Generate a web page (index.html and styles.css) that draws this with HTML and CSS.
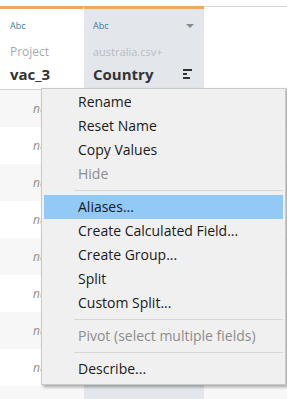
FILE: index.html
```html
<!DOCTYPE html>
<html lang="en">
<head>
  <meta charset="UTF-8" />
  <title>Data Source Grid</title>
  <link rel="stylesheet" href="styles.css">
</head>
<body>
  <div class="grid">
    <div class="header">
      <div class="col col-a">
        <div class="type">Abc</div>
        <div class="source">Project</div>
        <div class="name">vac_3</div>
      </div>
      <div class="col col-b">
        <div class="type">Abc <span class="caret"></span></div>
        <div class="source light">australia.csv+</div>
        <div class="name">Country
          <svg class="sort" width="10" height="10" viewBox="0 0 10 10">
            <rect x="0" y="0" width="9" height="2" fill="#333"/>
            <rect x="0" y="4" width="4" height="2" fill="#333"/>
            <rect x="0" y="8" width="7" height="2" fill="#333"/>
          </svg>
        </div>
      </div>
      <div class="col col-c"></div>
    </div>

    <div class="rows">
      <div class="row"><div class="cell-a">null</div><div class="cell-b"></div><div class="cell-c"></div></div>
      <div class="row"><div class="cell-a">null</div><div class="cell-b"></div><div class="cell-c"></div></div>
      <div class="row"><div class="cell-a">null</div><div class="cell-b"></div><div class="cell-c"></div></div>
      <div class="row"><div class="cell-a">null</div><div class="cell-b"></div><div class="cell-c"></div></div>
      <div class="row"><div class="cell-a">null</div><div class="cell-b"></div><div class="cell-c"></div></div>
      <div class="row"><div class="cell-a">null</div><div class="cell-b"></div><div class="cell-c"></div></div>
      <div class="row"><div class="cell-a">null</div><div class="cell-b"></div><div class="cell-c"></div></div>
      <div class="row"><div class="cell-a">null</div><div class="cell-b"></div><div class="cell-c"></div></div>
      <div class="row"><div class="cell-a"></div><div class="cell-b"></div><div class="cell-c"></div></div>
    </div>
  </div>

  <ul class="menu">
    <li>Rename</li>
    <li>Reset Name</li>
    <li>Copy Values</li>
    <li class="disabled">Hide</li>
    <li class="sep"></li>
    <li class="active">Aliases...</li>
    <li>Create Calculated Field...</li>
    <li>Create Group...</li>
    <li>Split</li>
    <li>Custom Split...</li>
    <li class="sep"></li>
    <li class="disabled">Pivot (select multiple fields)</li>
    <li class="sep"></li>
    <li>Describe...</li>
  </ul>
</body>
</html>
```

FILE: styles.css
```css
body {
  margin: 0;
  font-family: "Open Sans", "Noto Sans", sans-serif;
  background: #ffffff;
  overflow: hidden;
}

.grid {
  padding-top: 6px;
  width: 287px;
  height: 399px;
  box-sizing: border-box;
  overflow: hidden;
}

.header {
  display: flex;
  height: 83px;
  border-bottom: 1px solid #d4d4d4;
}

.col {
  box-sizing: border-box;
}

.col-a {
  width: 84px;
  border-top: 3px solid #f0a664;
  border-right: 1px solid #ffffff;
  padding-left: 10px;
}

.col-b {
  width: 120px;
  background: #e3e7eb;
  border-top: 3px solid #f0a664;
  padding-left: 9px;
  padding-right: 10px;
}

.col-c {
  flex: 1;
  border-top: 1px solid #d4d4d4;
}

.type {
  font-size: 9px;
  color: #3b7896;
  margin-top: 10px;
  height: 14px;
  line-height: 14px;
  display: flex;
  justify-content: space-between;
  align-items: center;
}

.caret {
  width: 0;
  height: 0;
  border-left: 4px solid transparent;
  border-right: 4px solid transparent;
  border-top: 4px solid #8a8a8a;
}

.source {
  font-size: 12px;
  color: #a9a9a9;
  margin-top: 11px;
  height: 16px;
  line-height: 16px;
}

.source.light {
  color: #b8bcc0;
  font-size: 11px;
}

.name {
  font-size: 15px;
  font-weight: bold;
  color: #333333;
  margin-top: 4px;
  line-height: 20px;
  display: flex;
  justify-content: space-between;
  align-items: center;
}

.sort {
  margin-right: 1px;
}

.row {
  display: flex;
  height: 37px;
}

.cell-a {
  width: 84px;
  padding-left: 33px;
  box-sizing: border-box;
  font-size: 12px;
  font-style: italic;
  color: #8f8f8f;
  line-height: 37px;
}

.cell-b {
  width: 120px;
  background: #e3e7eb;
}

.cell-c {
  flex: 1;
}

.row:nth-child(odd) .cell-a,
.row:nth-child(odd) .cell-c {
  background: #f7f7f7;
}

.menu {
  position: absolute;
  left: 41px;
  top: 88px;
  width: 245px;
  margin: 0;
  padding: 1px 0 3px;
  list-style: none;
  background: #f0f0f0;
  border: 1px solid #c9c9c9;
  box-sizing: border-box;
  box-shadow: 2px 2px 3px rgba(0, 0, 0, 0.35);
  font-size: 14px;
  color: #1a1a1a;
}

.menu li {
  height: 24px;
  line-height: 24px;
  padding-left: 34px;
  margin: 0 2px;
  white-space: nowrap;
}

.menu li.disabled {
  color: #8d8d8d;
}

.menu li.active {
  background: #91c9f7;
}

.menu li.sep {
  height: 1px;
  margin: 4px 2px 4px 32px;
  background: #d7d7d7;
}
```
